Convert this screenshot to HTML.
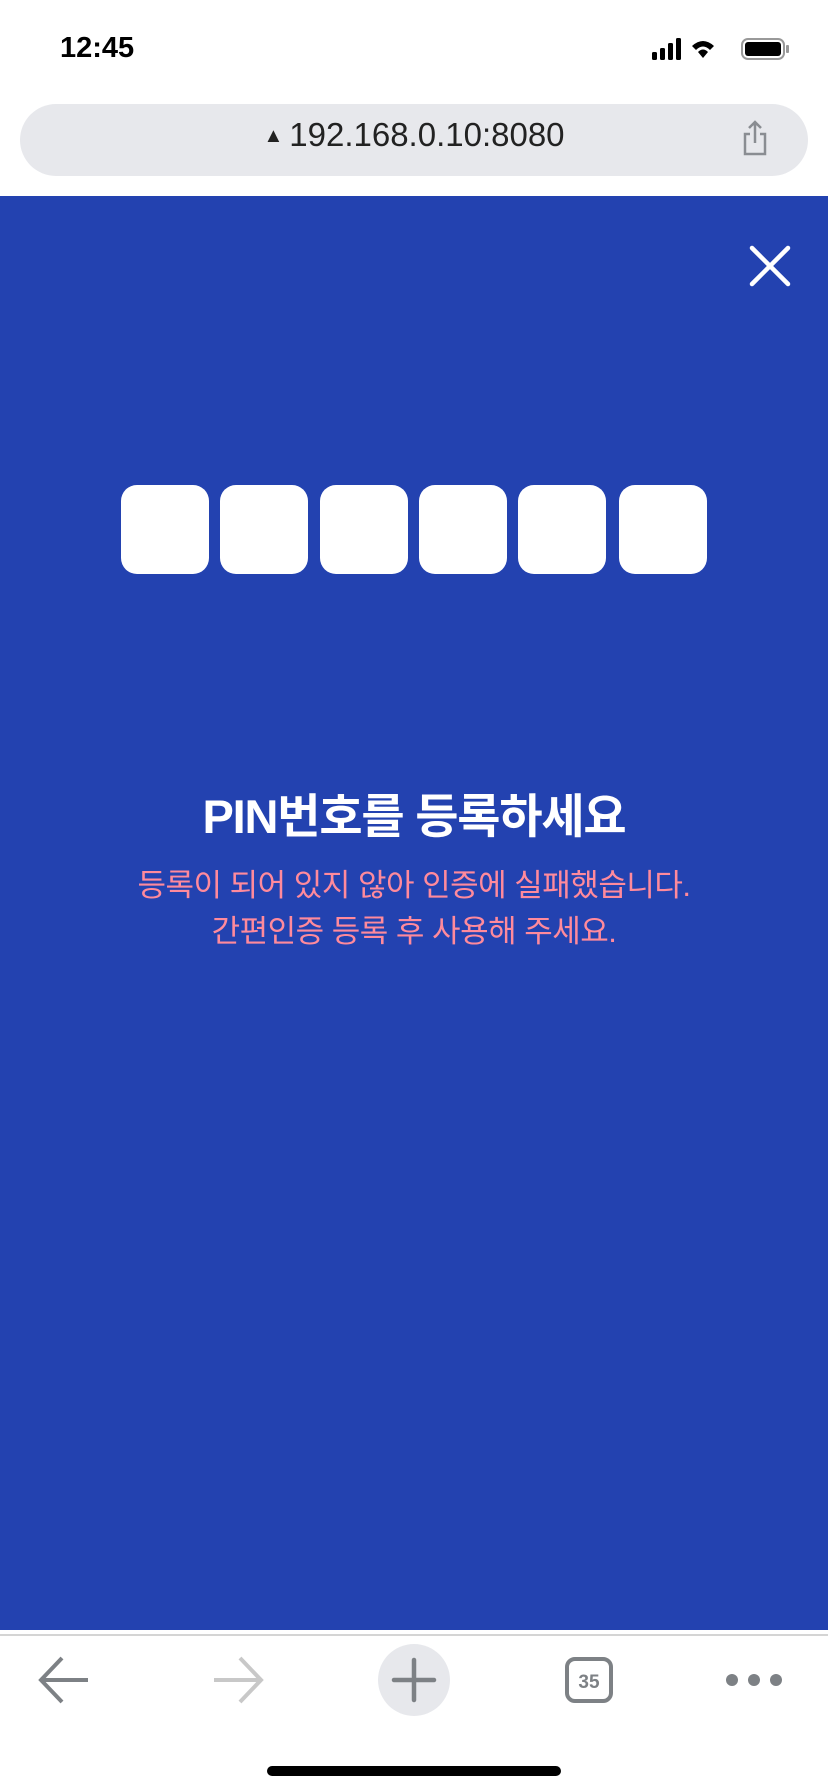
<!DOCTYPE html>
<html><head><meta charset="utf-8"><style>
html,body{margin:0;padding:0;width:828px;height:1792px;overflow:hidden;background:#fff;font-family:"Liberation Sans","Noto Sans CJK KR",sans-serif;}
.abs{position:absolute}
.box{position:absolute;top:485px;width:88px;height:89px;background:#fff;border-radius:16px}
</style></head><body>
<div class="abs" style="left:60px;top:32px;font-size:29px;font-weight:bold;color:#000">12:45</div>
<svg class="abs" style="left:650px;top:36px" width="150" height="28" viewBox="0 0 150 28">
<rect x="2" y="16" width="5" height="8" rx="1.5" fill="#000"/><rect x="10" y="12" width="5" height="12" rx="1.5" fill="#000"/><rect x="18" y="7" width="5" height="17" rx="1.5" fill="#000"/><rect x="26" y="2" width="5" height="22" rx="1.5" fill="#000"/>
<path d="M42 10 Q53 0 64 10 L60 14 Q53 7 46 14Z M48 16 Q53 11 58 16 L53 22Z" fill="#000"/>
<rect x="92" y="3" width="42" height="20" rx="6" fill="none" stroke="#999" stroke-width="2"/><rect x="95" y="6" width="36" height="14" rx="3" fill="#000"/><rect x="136" y="9" width="3" height="8" rx="1" fill="#999"/>
</svg>
<div class="abs" style="left:20px;top:104px;width:788px;height:72px;background:#e7e8ec;border-radius:36px"></div>
<div class="abs" style="left:0;width:828px;top:116px;text-align:center;font-size:33px;color:#222"><span style="font-size:20px;position:relative;top:-4px;margin-right:6px">▲</span>192.168.0.10:8080</div>
<svg class="abs" style="left:740px;top:119px" width="30" height="40" viewBox="0 0 30 40"><path d="M15 3V24 M9 9L15 3L21 9 M10 15H5V35H25V15H20" fill="none" stroke="#8a8d92" stroke-width="2.5"/></svg>
<div class="abs" style="left:0;top:196px;width:828px;height:1434px;background:#2342b0"></div>
<svg class="abs" style="left:748px;top:244px" width="44" height="44" viewBox="0 0 44 44"><path d="M4 4L40 40M40 4L4 40" stroke="#fff" stroke-width="4.5" stroke-linecap="round"/></svg>
<div class="box" style="left:121px"></div><div class="box" style="left:220px"></div><div class="box" style="left:320px"></div><div class="box" style="left:419px"></div><div class="box" style="left:518px"></div><div class="box" style="left:619px"></div>
<div class="abs" style="left:0;width:828px;top:778px;text-align:center;color:#fff;font-size:47px;font-weight:bold;letter-spacing:-1.2px">PIN번호를 등록하세요</div>
<div class="abs" style="left:0;width:828px;top:863px;text-align:center;color:#ff8a9c;font-size:31px;line-height:46px;letter-spacing:-0.5px">등록이 되어 있지 않아 인증에 실패했습니다.<br>간편인증 등록 후 사용해 주세요.</div>
<div class="abs" style="left:0;top:1634px;width:828px;height:2px;background:#d4d4d4"></div>
<svg class="abs" style="left:0;top:1640px" width="828" height="80" viewBox="0 0 828 80">
<path d="M88 40H42 M62 18L41 40L62 62" fill="none" stroke="#7d8185" stroke-width="4"/>
<path d="M214 40H261 M240 18L261 40L240 62" fill="none" stroke="#c8c8c8" stroke-width="4"/>
<ellipse cx="414" cy="40" rx="36" ry="36" fill="#e7e8ec"/>
<path d="M414 20V60 M394 40H434" stroke="#7d8185" stroke-width="4.5" stroke-linecap="round"/>
<rect x="567" y="19" width="44" height="42" rx="8" fill="none" stroke="#7d8185" stroke-width="4"/>
<text x="589" y="48" font-family="Liberation Sans" font-size="19" font-weight="bold" fill="#7d8185" text-anchor="middle">35</text>
<circle cx="732" cy="40" r="6" fill="#7d8185"/><circle cx="754" cy="40" r="6" fill="#7d8185"/><circle cx="776" cy="40" r="6" fill="#7d8185"/>
</svg>
<div class="abs" style="left:267px;top:1766px;width:294px;height:10px;background:#000;border-radius:5px"></div>
</body></html>
